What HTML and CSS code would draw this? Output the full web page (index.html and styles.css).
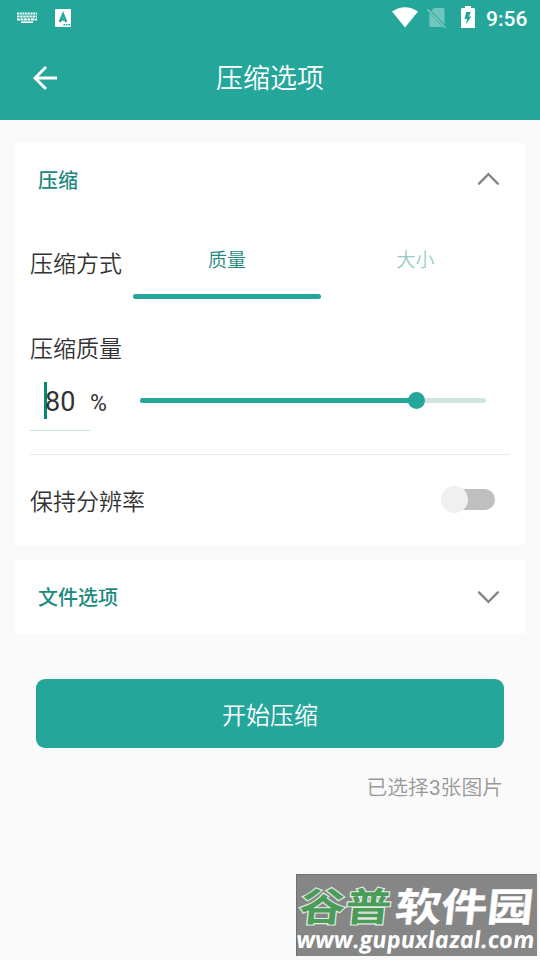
FILE: index.html
```html
<!DOCTYPE html>
<html lang="zh-CN">
<head>
<meta charset="utf-8">
<title>压缩选项</title>
<link rel="stylesheet" href="styles.css">
</head>
<body>
<header class="header">
  <div class="status">
    <svg class="keyboard" width="20" height="12" viewBox="0 0 20 12">
      <g fill="none" stroke="#fff" stroke-width="2">
        <path d="M0 1.6H20" stroke-dasharray="2 .7"/>
        <path d="M0 4.5H20" stroke-dasharray="2.4 .7"/>
        <path d="M0 7.4H20" stroke-dasharray="2.9 .6"/>
        <path d="M4 10.2H16" stroke-width="1.6"/>
      </g>
    </svg>
    <svg class="ime" width="16" height="18" viewBox="0 0 16 18">
      <rect width="16" height="18" rx="1" fill="#fff"/>
      <path d="M4.8 13 8 5 11.2 13M6 10.5H10" fill="none" stroke="#24a69b" stroke-width="2.3"/>
      <path d="M8.5 15.7H15" stroke="#24a69b" stroke-width="1.5" stroke-dasharray="1.6 .8"/>
    </svg>
    <svg class="wifi" width="26" height="21" viewBox="0 0 26 21"><path d="M0 4.5Q13-4.2 26 4.5L13 20.6Z" fill="#fff"/></svg>
    <svg class="nosim" width="20" height="22" viewBox="0 0 20 22">
      <path d="M7 1H16Q17.5 1 17.5 2.5V17.2L4.2 3.8ZM2.3 6.1 16 20H4Q2.3 20 2.3 18.5Z" fill="#fff" opacity=".35"/>
      <path d="M.5 2.3 18.5 20.8" stroke="#fff" stroke-width="1.6" opacity=".4"/>
    </svg>
    <svg class="battery" width="14" height="22" viewBox="0 0 14 22"><path d="M1 2H4V0H10V2H13L14 3V22H0V3Z" fill="#fff"/><path d="M5.2 6H9.8L8 10.5H10.3L5 18.5 6 13H3.5Z" fill="#24a69b"/></svg>
    <span class="clock">9:56</span>
  </div>
  <div class="appbar">
    <svg class="back" width="24" height="24" viewBox="0 0 24 24"><path d="M24 12H2M13 1 2 12 13 23" fill="none" stroke="#fff" stroke-width="2.9"/></svg>
    <h1 class="title">压缩选项</h1>
  </div>
</header>
<main class="content">
  <section class="card">
    <div class="card-head">
      <h2 class="heading">压缩</h2>
      <svg width="22" height="14" viewBox="0 0 22 14"><path d="M2 11.6 11.4 2.2 20.8 11.6" fill="none" stroke="#888" stroke-width="2.4" stroke-linecap="round"/></svg>
    </div>
    <div class="mode">
      <span class="label">压缩方式</span>
      <div class="tabs">
        <div class="tab active">质量<div class="indicator"></div></div>
        <div class="tab">大小</div>
      </div>
    </div>
    <div class="label quality-label">压缩质量</div>
    <div class="quality">
      <div class="field"><span class="caret"></span><span class="value">80</span></div>
      <span class="percent">%</span>
      <div class="slider"><div class="fill"></div><div class="thumb"></div><div class="rest"></div></div>
    </div>
    <div class="keep">
      <span class="label">保持分辨率</span>
      <div class="switch"><div class="knob"></div></div>
    </div>
  </section>
  <section class="card files">
    <h2 class="heading">文件选项</h2>
    <svg width="22" height="14" viewBox="0 0 22 14"><path d="M2 2.4 11.4 11.8 20.8 2.4" fill="none" stroke="#888" stroke-width="2.4" stroke-linecap="round"/></svg>
  </section>
  <button class="start">开始压缩</button>
  <p class="selected">已选择<span class="count">3</span>张图片</p>
</main>
<svg class="watermark" width="241" height="82" viewBox="0 0 241 82">
  <rect width="241" height="82" fill="#868686"/>
  <path d="M.5 82V.5H241" fill="none" stroke="#707070"/>
  <g class="brand">
    <text class="brand-green" transform="translate(2 46.5) skewX(-6) scale(1.18 1)">谷普</text>
    <text class="brand-white" transform="translate(98 46.5) skewX(-6) scale(1.18 1)">软件园</text>
  </g>
  <text class="site" transform="translate(1 74) skewX(5)" textLength="238" lengthAdjust="spacingAndGlyphs">www.gupuxlazal.com</text>
</svg>
</body>
</html>
```
FILE: styles.css
```css
* { box-sizing: border-box; }
body {
  margin: 0;
  width: 540px;
  height: 960px;
  overflow: hidden;
  background: #fafafa;
  color: #333;
  font-family: "Noto Sans CJK SC", sans-serif;
}
h1, h2, p { margin: 0; }
svg { display: block; flex: none; }

.header { height: 120px; background: #24a69b; color: #fff; }
.status { display: flex; height: 36px; align-items: center; padding: 0 12px 0 17px; }
.ime { margin-left: 18px; }
.wifi { margin: -2px 0 0 auto; }
.nosim { margin-left: 9px; }
.battery { margin: -2px 0 0 14px; }
.clock { margin: 2px 0 0 11px; font: 500 21px/24px Roboto, sans-serif; width: 42px; white-space: nowrap; }
.appbar { display: grid; grid-template-columns: 60px 1fr 60px; height: 84px; align-items: center; }
.back { margin-left: 33px; }
.title { text-align: center; font-size: 27px; line-height: 40px; font-weight: 350; padding-bottom: 3px; }

.content { padding: 23px 15px 0; }
.card { background: #fff; height: 402px; }
.card-head, .files { display: flex; align-items: center; justify-content: space-between; height: 74px; padding: 0 26px 0 23px; }
.card-head svg { margin-top: -2px; }
.heading { font-size: 20px; line-height: 30px; font-weight: 500; color: #1d8a80; }
.mode { display: flex; height: 83px; padding: 0 15px; }
.label { font-size: 23px; line-height: 34px; font-weight: 350; white-space: nowrap; }
.mode .label { width: 103px; padding-top: 28px; }
.tabs { display: grid; grid-template-columns: 188px 189px; height: 83px; }
.tab { display: flex; flex-direction: column; text-align: center; font-size: 19px; line-height: 28px; padding-top: 28px; color: #97cdc6; font-weight: 350; }
.active { color: #1d8a80; }
.indicator { margin-top: 21.4px; height: 4.6px; border-radius: 2.3px; background: #24a69b; }
.quality-label { height: 34px; margin: 30px 15px 0; }
.quality { display: flex; height: 74px; padding: 18px 15px 0; }
.field { display: flex; align-items: flex-start; width: 60px; height: 49px; border-bottom: 1px solid #c9e3e2; padding-left: 14px; }
.caret { width: 3px; height: 37px; background: #068879; }
.value { margin-left: -2px; font: 27px/40px Roboto, sans-serif; }
.percent { width: 50px; font: 23px/43px Roboto, sans-serif; }
.slider { display: flex; align-items: center; width: 346px; height: 37px; }
.fill { width: 270px; height: 5px; border-radius: 3px 0 0 3px; background: #24a69b; margin-right: -2px; }
.thumb { width: 17px; height: 17px; border-radius: 50%; background: #24a69b; z-index: 1; }
.rest { flex: 1; height: 5px; margin-left: -2px; border-radius: 0 3px 3px 0; background: #cfe5e2; }
.keep { display: flex; align-items: center; justify-content: space-between; margin: 16px 15px 0; padding-right: 15px; height: 91px; border-top: 1px solid #e8e8e8; }
.switch { display: flex; align-items: center; width: 51px; height: 21px; border-radius: 11px; background: #bfbfbf; margin-top: -2px; }
.knob { width: 27px; height: 27px; border-radius: 50%; background: #f0f0f0; margin-left: -3px; flex: none; }
.files { margin-top: 15px; }
.start { display: block; width: 468px; height: 69px; margin: 45px 21px 0; padding: 0; border: 0; border-radius: 9px; background: #24a69b; color: #fff; font: 350 24px/36px "Noto Sans CJK SC", sans-serif; }
.selected { margin: 22px 22px 0; text-align: right; font: 350 20.8px/32px "Noto Sans CJK SC", sans-serif; color: #999; }
.count { font-family: Roboto, sans-serif; font-weight: 400; }

.watermark { position: absolute; left: 296px; top: 874px; }
.brand { font: 700 39px "Noto Sans CJK SC", sans-serif; }
.brand-green { fill: #4b9b59; stroke: #e4ece4; stroke-width: 2.2px; paint-order: stroke; }
.brand-white { fill: #fff; stroke: #fff; stroke-width: .4px; }
.site { font: italic 700 23.5px "Open Sans", sans-serif; fill: #fff; }
```
